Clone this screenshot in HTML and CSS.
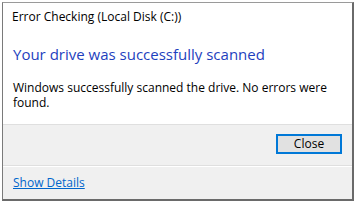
FILE: index.html
```html
<!DOCTYPE html>
<html>
<head>
<meta charset="utf-8">
<link rel="stylesheet" href="styles.css">
</head>
<body>
<div class="window">
  <div class="main">
    <div class="title">Error Checking (Local Disk (C:))</div>
    <div class="heading">Your drive was successfully scanned</div>
    <div class="message">Windows successfully scanned the drive. No errors were found.</div>
  </div>
  <div class="buttons">
    <button class="btn">Close</button>
  </div>
  <div class="footer">
    <a class="link" href="#">Show Details</a>
  </div>
</div>
</body>
</html>
```
FILE: styles.css
```css
html, body {
  margin: 0;
  padding: 0;
  background: #ffffff;
}
body {
  padding: 2px 2px 0 2px;
  font-family: "Open Sans", "Liberation Sans", sans-serif;
  font-size: 12px;
  color: #000;
}
.window {
  width: 349px;
  height: 196px;
  border-top: 1px solid #9a9a9a;
  border-left: 1px solid #7a7a7a;
  border-right: 2px solid #6a6a6a;
  border-bottom: 2px solid #6a6a6a;
  display: flex;
  flex-direction: column;
  background: #f0f0f0;
}
.main {
  background: #fff;
  height: 121px;
  border-bottom: 1px solid #dfdfdf;
  padding: 0 10px;
}
.title {
  padding-top: 6px;
  margin-left: -1px;
  line-height: 16px;
  height: 16px;
}
.heading {
  margin-top: 19px;
  font-size: 15px;
  line-height: 20px;
  color: #1e3fbe;
}
.message {
  margin-top: 16px;
  line-height: 15px;
}
.buttons {
  height: 40px;
  border-bottom: 1px solid #dfdfdf;
  display: flex;
  justify-content: flex-end;
  align-items: flex-start;
  padding-right: 10px;
}
.btn {
  margin-top: 9px;
  width: 66px;
  height: 20px;
  border: 2px solid #0078d7;
  background: #e1e1e1;
  font-family: inherit;
  font-size: 12px;
  color: #000;
  padding: 0;
  line-height: 16px;
}
.footer {
  flex: 1;
  border-top: 1px solid #ffffff;
  padding: 7px 10px 0 10px;
}
.link {
  color: #0066cc;
  text-decoration: underline;
  line-height: 16px;
}
```
